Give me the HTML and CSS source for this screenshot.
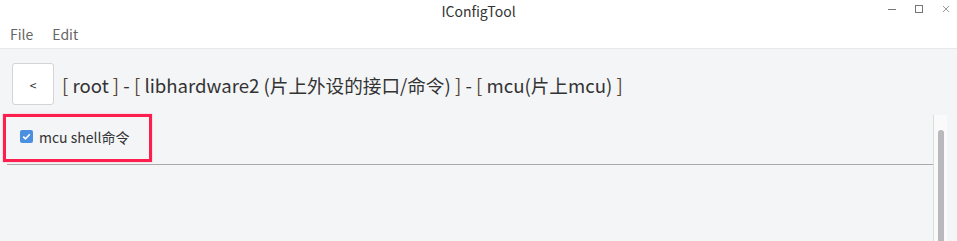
FILE: index.html
```html
<!DOCTYPE html>
<html lang="zh">
<head>
<meta charset="utf-8">
<title>IConfigTool</title>
<link rel="stylesheet" href="styles.css">
</head>
<body>
<div class="window">
  <header class="titlebar">
    <span class="title">IConfigTool</span>
    <div class="controls">
      <svg class="ctl" width="10" height="10" viewBox="0 0 10 10"><path d="M1 5.5h8" stroke="#777" stroke-width="1"/></svg>
      <svg class="ctl" width="10" height="10" viewBox="0 0 10 10"><rect x="1.5" y="1.5" width="7" height="7" fill="none" stroke="#777" stroke-width="1"/></svg>
      <svg class="ctl" width="10" height="10" viewBox="0 0 10 10"><path d="M2 2l6 6M8 2l-6 6" stroke="#999" stroke-width="1"/></svg>
    </div>
  </header>
  <nav class="menubar">
    <span class="menu">File</span>
    <span class="menu">Edit</span>
  </nav>
  <main class="content">
    <div class="crumbbar">
      <button class="back">&lt;</button>
      <div class="crumbs"><span class="br">[</span> root <span class="br">]</span> - <span class="br">[</span> libhardware2 (片上外设的接口/命令) <span class="br">]</span> - <span class="br">[</span> mcu(片上mcu) <span class="br">]</span></div>
    </div>
    <div class="panel">
      <div class="list">
        <div class="item">
          <span class="check"><svg width="13" height="13" viewBox="0 0 13 13"><rect width="13" height="13" rx="2" fill="#4a8fe0"/><path d="M3.2 6.6l2.3 2.3 4.3-4.6" fill="none" stroke="#fff" stroke-width="1.6"/></svg></span>
          <span class="label">mcu shell命令</span>
        </div>
        <div class="rule"></div>
        <div class="highlight"></div>
      </div>
      <div class="scrollbar"><div class="thumb"></div></div>
    </div>
  </main>
</div>
</body>
</html>
```

FILE: styles.css
```css
* { box-sizing: border-box; }
html, body { margin: 0; padding: 0; }
body {
  width: 957px;
  height: 241px;
  overflow: hidden;
  font-family: "Noto Sans CJK SC", "Noto Sans", sans-serif;
  color: #333;
  background: #f4f5f7;
}
.window { display: flex; flex-direction: column; height: 241px; }
.titlebar {
  height: 22px;
  background: #fff;
  display: flex;
  align-items: center;
  justify-content: center;
  position: relative;
}
.title { font-size: 14px; color: #333; line-height: 22px; }
.controls {
  position: absolute;
  right: 6px;
  top: 4px;
  display: flex;
  gap: 17px;
}
.ctl { display: block; }
.menubar {
  height: 27px;
  background: #fff;
  border-bottom: 1px solid #e8e8e8;
  display: flex;
  align-items: center;
  gap: 19px;
  padding-left: 10px;
  padding-bottom: 2px;
}
.menu { font-size: 14px; color: #666; }
.content { flex: 1; display: flex; flex-direction: column; }
.crumbbar {
  display: flex;
  align-items: center;
  padding: 14px 0 0 12px;
  gap: 8px;
}
.back {
  width: 42px;
  height: 42px;
  background: #fff;
  border: 1px solid #d4d4d4;
  border-radius: 3px;
  font-family: inherit;
  font-size: 12px;
  color: #333;
  padding: 0;
}
.crumbs { font-size: 18.6px; color: #333; white-space: pre; }
.br { color: #5a4632; }
.panel {
  flex: 1;
  display: flex;
  margin-top: 10px;
  padding-left: 7px;
  padding-right: 10px;
}
.list { flex: 1; position: relative; }
.item {
  display: flex;
  align-items: center;
  height: 42px;
  padding-left: 13px;
  padding-top: 6px;
  padding-bottom: 5px;
  gap: 6px;
}
.check { display: flex; }
.label { font-size: 14px; color: #333; }
.rule { height: 1px; background: #aaa; margin-top: 7px; }
.highlight {
  position: absolute;
  left: -4px;
  top: -1px;
  width: 149px;
  height: 48px;
  border: 3px solid #ff1f4f;
  box-shadow: 0 0 1px rgba(255, 31, 79, 0.5);
}
.scrollbar {
  width: 14px;
  background: #fafafa;
  border-left: 1px solid #ddd;
  padding: 15px 3px 0 4px;
  display: flex;
}
.thumb {
  flex: 1;
  background: #b8b8bd;
  border-radius: 3px 3px 0 0;
}
```
